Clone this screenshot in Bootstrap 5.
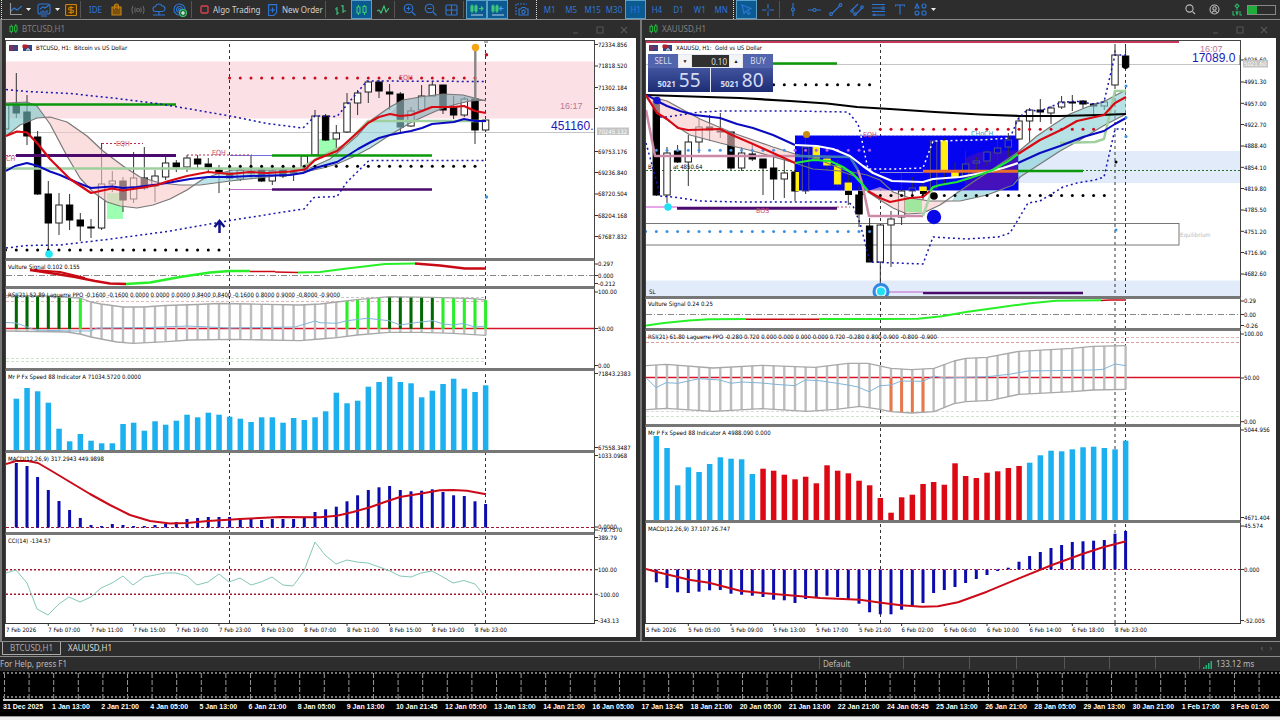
<!DOCTYPE html>
<html lang="en">
<head>
<meta charset="utf-8">
<meta name="viewport" content="width=device-width, initial-scale=1">
<title>Trading terminal</title>
<link href="https://cdn.jsdelivr.net/npm/bootstrap@5.3.0/dist/css/bootstrap.min.css" rel="stylesheet">
<style>
:root{--ui:"Noto Sans","Open Sans",sans-serif;--chart:"DejaVu Sans Condensed","Noto Sans",sans-serif;--line:#8a8a8a;--ink:#2c77d8}
body{background:#2d2d2d;color:#d0d0d0;font:8px/12px var(--ui)}
.tools{height:20px;border-bottom:1px solid var(--line)}
.tools button{background:none;border:1px solid transparent;padding:0;color:inherit;height:19px;width:21px;display:flex;align-items:center;justify-content:center;flex:none;white-space:nowrap}
.tools button.on{background:#0c5a92;border-color:#5aa0c8}
.tools svg,.mini{fill:none;stroke:var(--ink);stroke-width:1.1;flex:none}
.tools .pair{width:28px;gap:4px}
.tools .algo{width:66px;gap:4px;justify-content:flex-start;padding-left:3px}
.tools .order{width:62px;gap:4px;justify-content:flex-start;padding-left:5px}
.divide{width:5px;height:17px;flex:none;border-left:1px solid #555;margin-left:1px}
.divide.thin{width:3px}
.grip{width:2px;height:19px;flex:none;border-left:1px dotted #ddd;margin:0 1px}
.evenly{flex:none}.frames{width:193px}.draws{width:129px}
.evenly button{flex:1 1 0;width:auto;color:var(--ink)}
.battery{width:29px;height:10px;border:1px solid #888}
.battery span{display:block;width:9px;height:8px;background:#1fae3c}
.win{border-left:2px solid #777;padding:0 4px 4px 3px;min-width:0}
.titlebar{height:18px;color:#808080}
.titlebar button{background:none;border:0;padding:0;width:24px;height:16px;display:flex;align-items:center;justify-content:center;margin-top:2px}
.sheet{background:#fff;padding-top:2px;color:#000}
.plot{border:solid #444;border-width:0 1px 3px;border-bottom-color:#777;min-width:0}
.pane:first-child .plot{border-top:1px solid #444}
.pane:nth-last-child(2) .plot{border-bottom:1px solid #333}
.plot>svg,.scale>svg{display:block;width:100%}
.scale{width:41px;flex:none}.gold .scale{width:35px}
.dates svg{display:block;width:100%;height:13px}
.sheet text{font-family:var(--chart);font-size:6px;fill:#000}
.sheet text.big{font:12px "Liberation Sans",sans-serif;fill:#1a1ab4}
.sheet text.clock{font:9px "Liberation Sans",sans-serif;fill:#b87896}
.deal{left:3px;top:16px;width:125px;color:#d4dcf4;font-family:var(--ui);background:#e4e8f4}
.deal button{background:#34468f;color:inherit;border:0;padding:0}
.deal .side{width:30px;height:14px;background:#5264ac;font-size:8px}
.deal input{width:37px;height:12px;background:#303030;border:0;color:#ddd;font:8px var(--ui);text-align:right;padding:0 2px}
.deal .step{width:12px;height:12px;background:#f4f4f4;color:#111;font-size:5px;line-height:12px}
.deal .quotes{gap:1px}
.deal .quote{height:24px;background:linear-gradient(#42549f,#1c2c74);display:flex;align-items:flex-end;justify-content:center;gap:3px;flex:1 1 0;font-size:8px;line-height:10px;padding-bottom:3px}
.deal .quote b{font-size:19px;font-weight:400;line-height:18px}
.deal .quote span{font-weight:700}
.tabs{height:16px;border-top:1px solid var(--line);border-bottom:1px solid var(--line);padding-left:2px}
.tabs a{color:#ddd;text-decoration:none;height:13px;line-height:12px;padding:0 7px}
.tabs a.cur{border:1px solid #aaa;border-top:0;color:#aaa}
.status{height:14px;line-height:13px;color:#bbb}
.status span{border-left:1px solid #555;padding-left:3px;flex:none;height:12px}
.strip{background:#000;height:45px;padding-left:3px}
.strip .labels{border-top:2px solid #ccc;font:bold 7px/12px "Liberation Sans",sans-serif;color:#fff}
.strip .labels span{flex:1 1 0;min-width:0;white-space:nowrap}
.foot{height:4px;background:#eee;border-top:1px solid #999}
</style>
</head>
<body class="d-flex flex-column min-vh-100">
<header class="tools d-flex align-items-center">
  <i class="grip"></i><i style="width:2px"></i>
  <button class="pair" aria-label="New chart"><svg width="13" height="13"><path d="M1.5 0v11.5H13M1 9l4-4 3 2 5-4" /><path d="M1.5 0v11.5H13" stroke="#999"/></svg><svg width="5" height="4"><path d="M0 0h5l-2.500 3z" fill="#eee" stroke="none"/></svg></button>
  <button class="pair" aria-label="Indicators"><svg width="14" height="14"><rect x="1" y="1" width="12" height="10" rx="2"/><path d="M3 6l3-2 2 1 4-3M4 8v2M6 7v3M8 8v2M10 7v3M4 13h6"/></svg><svg width="5" height="4"><path d="M0 0h5l-2.500 3z" fill="#eee" stroke="none"/></svg></button>
  <button style="width:17px" aria-label="Market"><svg width="12" height="12" style="stroke:#c98315"><rect x=".5" y=".5" width="11" height="11" rx="1" fill="#4a3208"/><path d="M8.500 3.500H5Q3.500 3.500 3.500 4.700T5 6h2q1.500 0 1.500 1.300T7 8.500H3.500M6 2v8"/></svg></button>
  <i class="divide"></i>
  <button aria-label="IDE"><span style="color:#2c77d8">IDE</span></button>
  <button aria-label="Shop"><svg width="11" height="13" style="stroke:#c98315"><path d="M1 4h9v8H1zM3.500 6V3q0-2 2-2t2 2v3" fill="#7a5210"/></svg></button>
  <button aria-label="Signals"><svg width="14" height="10" style="stroke:#666"><circle cx="7" cy="5" r="1.500"/><path d="M4.500 2.500q-1.500 2.500 0 5M9.500 2.500q1.500 2.500 0 5M2 1q-2 4 0 8M12 1q2 4 0 8"/></svg></button>
  <button aria-label="Cloud"><svg width="14" height="13"><path d="M3.500 8.500a2.500 2.500 0 0 1 0-5 3.500 3.500 0 0 1 6.500-.5 2.700 2.700 0 0 1 .5 5.500zM7 8.500V12M1 12h12"/></svg></button>
  <button aria-label="Network"><svg width="14" height="14"><path d="M6 12A5.500 5.500 0 1 1 12 6.500M6 9.500A3 3 0 1 1 9.500 6"/><circle cx="6.500" cy="6.500" r="1"/><circle cx="10" cy="10" r="3.500" fill="#1f6b3c" stroke="#3ec46e"/><path d="M10 8v4M8 10h4" stroke="#fff"/></svg></button>
  <i class="divide"></i>
  <button class="algo"><svg width="9" height="9"><rect x="1" y="1" width="7" height="7" rx="1" stroke="#d8414b" stroke-width="1.400"/></svg>Algo Trading</button>
  <button class="order"><svg width="10" height="12"><path d="M.6.6h8v8l-3 3h-5zM4.600 3.500v5M2 6h5"/></svg>New Order</button>
  <i class="divide"></i>
  <button aria-label="Bars"><svg width="13" height="12" style="stroke:#3cc878"><path d="M3 3v8M3 5H1M3 9h2M9 1v8M9 2H7M9 7h3"/></svg></button>
  <button class="on" aria-label="Candles"><svg width="11" height="12" style="stroke:#3cc878"><path d="M1 3h3v6H1zM2.500 1v2M2.500 9v2M7 2.500h3v6H7zM8.500 1v1M8.500 9v2"/></svg></button>
  <button aria-label="Line"><svg width="12" height="10" style="stroke:#3cc878"><path d="M0 6l2-1 2 3 3-7 2 6 3-4"/></svg></button>
  <i class="divide"></i>
  <button aria-label="Zoom in"><svg width="13" height="13"><circle cx="5.500" cy="5.500" r="4.300"/><path d="M9 9l3.500 3.500M3.500 5.500h4M5.500 3.500v4"/></svg></button>
  <button aria-label="Zoom out"><svg width="13" height="13"><circle cx="5.500" cy="5.500" r="4.300"/><path d="M9 9l3.500 3.500M3.500 5.500h4"/></svg></button>
  <button aria-label="Tile"><svg width="13" height="12"><rect x="1" y="1" width="11" height="10" rx="1"/><path d="M6.500 1v10M1 6h11"/></svg></button>
  <i class="divide thin"></i>
  <button class="on" aria-label="Auto scroll"><svg width="14" height="12" style="stroke:#3cc878"><path d="M1 2h2v5H1zM5 2h2v5H5zM2 .5V9M6 .5V9M9 4.500h4M11 2.500l2 2-2 2"/><path d="M1 11h12" stroke="#aac8e0"/></svg></button>
  <button class="on" aria-label="Shift"><svg width="14" height="12" style="stroke:#3cc878"><path d="M1 2h2v5H1zM5 2h2v5H5zM2 .5V9M6 .5V9"/><path d="M8.500 4.500h4M10.500 2.500l-2 2 2 2" stroke="#4a9cf0"/><path d="M1 11h12" stroke="#aac8e0"/></svg></button>
  <button style="width:27px" aria-label="Screenshot"><svg width="14" height="13"><path d="M1 12V1h11" stroke-dasharray="2 1"/><path d="M4 6h2l1-1.500h3L11 6h2v6H4z"/><circle cx="8.500" cy="8.800" r="1.700"/></svg></button>
  <i class="grip"></i>
  <div class="evenly frames d-flex"><button>M1</button><button>M5</button><button>M15</button><button>M30</button><button class="on">H1</button><button>H4</button><button>D1</button><button>W1</button><button>MN</button></div>
  <i class="grip"></i>
  <button class="on" aria-label="Cursor"><svg width="11" height="11"><path d="M1 1l9 3.500L6.500 6 9 9.500 7.500 10.500 5 7 3 9.500z"/></svg></button>
  <button aria-label="Crosshair"><svg width="12" height="12"><path d="M6 0v4.500M6 7.500V12M0 6h4.500M7.500 6H12M6 6h.5"/></svg></button>
  <i class="divide thin"></i>
  <div class="evenly draws d-flex">
    <button aria-label="Vertical line"><svg width="6" height="13"><path d="M3 0v5M3 8v5"/><circle cx="3" cy="6.500" r="1.500"/></svg></button>
    <button aria-label="Horizontal line"><svg width="13" height="6"><path d="M0 3h5M8 3h5"/><circle cx="6.500" cy="3" r="1.500"/></svg></button>
    <button aria-label="Trend line"><svg width="14" height="13"><path d="M3 10.500l7.500-7.500"/><circle cx="2" cy="11" r="1.400"/><circle cx="11.500" cy="2" r="1.400"/></svg></button>
    <button aria-label="Channel"><svg width="14" height="13"><path d="M2 7l6-6M5 12l7-7"/><circle cx="2" cy="8" r="1.300"/><circle cx="12" cy="4" r="1.300"/><circle cx="5" cy="11" r="1.300"/></svg></button>
    <button aria-label="Fibonacci"><svg width="14" height="13"><path d="M0 1.500h13M0 5h9M0 8.500h13M3 12h10"/><circle cx="11" cy="5" r="1.300"/><circle cx="2" cy="12" r="1"/></svg></button>
    <button aria-label="Text"><svg width="10" height="11"><path d="M.5 2.500V1h9v1.500M5 1v9.500"/></svg></button>
  </div>
  <button class="pair" aria-label="Shapes"><svg width="13" height="13"><path d="M1 5l2-4 2 4z"/><circle cx="10" cy="3" r="2"/><circle cx="3" cy="10" r="2"/><rect x="8" y="8" width="4" height="4" rx="1"/></svg><svg width="5" height="4"><path d="M0 0h5l-2.500 3z" fill="#eee" stroke="none"/></svg></button>
  <div class="ms-auto d-flex align-items-center pe-1">
    <button style="width:24px" aria-label="Search"><svg width="11" height="11" style="stroke:#bbb"><circle cx="4.500" cy="4.500" r="3.600"/><path d="M7.500 7.500L10 10"/></svg></button>
    <button style="width:24px" aria-label="Account"><svg width="11" height="11" style="stroke:#bbb"><circle cx="5.500" cy="5.500" r="4.500"/><circle cx="5.500" cy="4.500" r="1.700"/><path d="M2.500 9q3-4 6 0"/></svg></button>
    <button aria-label="Level"><svg width="10" height="13" style="stroke:#2db565"><path d="M5 1l2 2-2 2-2-2zM5 5v2M1 8v4h2M4 8l1 4 1-4M8 8v4h2"/></svg></button>
    <div class="battery"><span></span></div>
  </div>
</header>

<main class="row g-0">
  <section class="col win">
    <div class="titlebar d-flex align-items-center"><svg class="mini ms-1 me-1" style="stroke:#1fae3c" width="9" height="10"><path d="M1 2.500h2.500v5H1zM2.300.5v2M2.300 7.500v2M5.500 2h2.500v5H5.500zM6.800 0v2M6.800 7v2"/></svg>BTCUSD,H1<div class="ms-auto d-flex"><button aria-label="Minimize"><svg class="mini" width="8" height="8" style="stroke:#555"><path d="M1 7h5"/></svg></button><button aria-label="Maximize"><svg class="mini" width="8" height="8" style="stroke:#555"><path d="M1 1h6v6H1z"/></svg></button><button aria-label="Close"><svg class="mini" width="8" height="8" style="stroke:#555"><path d="M1 1l6 6M7 1L1 7"/></svg></button></div></div>
    <div class="sheet" id="btc"></div>
  </section>
  <section class="col win">
    <div class="titlebar d-flex align-items-center"><svg class="mini ms-1 me-1" style="stroke:#1fae3c" width="9" height="10"><path d="M1 2.500h2.500v5H1zM2.300.5v2M2.300 7.500v2M5.500 2h2.500v5H5.500zM6.800 0v2M6.800 7v2"/></svg>XAUUSD,H1<div class="ms-auto d-flex"><button aria-label="Minimize"><svg class="mini" width="8" height="8" style="stroke:#555"><path d="M1 7h5"/></svg></button><button aria-label="Maximize"><svg class="mini" width="8" height="8" style="stroke:#555"><path d="M1 1h6v6H1z"/></svg></button><button aria-label="Close"><svg class="mini" width="8" height="8" style="stroke:#555"><path d="M1 1l6 6M7 1L1 7"/></svg></button></div></div>
    <div class="position-relative">
      <div class="sheet gold" id="xau"></div>
      <div class="deal position-absolute">
        <div class="d-flex align-items-center justify-content-between"><button class="side">SELL</button><button class="step" aria-label="Less">▼</button><input value="0.10" aria-label="Volume"><button class="step" aria-label="More">▲</button><button class="side">BUY</button></div>
        <div class="quotes d-flex"><button class="quote"><span>5021</span><b>55</b></button><button class="quote"><span>5021</span><b>80</b></button></div>
      </div>
    </div>
  </section>
</main>

<nav class="tabs d-flex"><a href="#btc" class="cur">BTCUSD,H1</a><a href="#xau">XAUUSD,H1</a><span class="ms-auto me-2 text-secondary">‹ &nbsp; ›</span></nav>
<footer>
  <div class="status d-flex"><div class="flex-fill">For Help, press F1</div><span style="width:84px">Default</span><span style="width:66px"></span><span style="width:47px"></span><span style="width:48px"></span><span style="width:45px"></span><span style="width:46px"></span><span style="width:44px"></span><span style="width:81px"><svg width="9" height="8" class="me-1"><path d="M0 8V6h1.500v2zM2.500 8V4H4v4zM5 8V2h1.500v6zM7.500 8V0H9v8z" fill="#1fb57a"/></svg>133.12 ms</span></div>
  <div class="strip"><svg class="d-block w-100" height="28"><defs><pattern id="cells" width="24.6" height="28" patternUnits="userSpaceOnUse"><path d="M1.500 2v26" stroke="#999" stroke-dasharray="5 2"/></pattern></defs><rect width="100%" height="28" fill="url(#cells)"/><path d="M0 2h3000M0 26h3000" stroke="#777" stroke-width="2" stroke-dasharray="2 2"/></svg><div class="labels d-flex" id="days"></div></div>
  <div class="foot"></div>
</footer>

<script>
const f = n => Math.round(n * 10) / 10;
const line = (p, c, w = 1, o = '') => `<polyline points="${p}" fill="none" stroke="${c}" stroke-width="${w}" stroke-linejoin="round" ${o}/>`;
const area = (p, c, o = .6) => `<polygon points="${p}" fill="${c}" fill-opacity="${o}"/>`;
const hline = (y, a, b, c, w = 1, d = '') => `<path d="M${a} ${y}H${b}" stroke="${c}" stroke-width="${w}" ${d && `stroke-dasharray="${d}"`}/>`;
const vdash = (...xs) => xs.map(x => `<path d="M${x} 38V624" stroke="#333" stroke-dasharray="3 3"/>`).join('');
const rect = (x, y, w, h, c, s = 'none') => `<rect x="${f(x)}" y="${y}" width="${w}" height="${f(h)}" fill="${c}" stroke="${s}"/>`;
const text = (x, y, t, o = '') => `<text x="${x}" y="${y}" ${o}>${t}</text>`;
const dot = (x, y, r, c, o = '') => `<circle cx="${f(x)}" cy="${y}" r="${r}" fill="${c}" ${o}/>`;
const at = (base, i) => f(base + 10.667 * i);
const dots = (base, a, b, y, c) => Array.from({length: b - a + 1}, (_, k) => dot(at(base, a + k), y, 1.5, c)).join('');
const blueDots = 'stroke-dasharray="2 3"';

// kinds: u rising, d falling, y yellow, b hollow on the box
function candles(base, list, first) {
  return list.map(([kind, hi, lo, top, bottom], k) => {
    const x = at(base, first + k), h = Math.max(bottom - top, 1);
    const fill = {u: '#fff', d: '#000', y: '#ffee10', b: '#0000e8'}[kind];
    const edge = {u: '#222', d: '#000', y: '#ffee10', b: '#505080'}[kind];
    return `<path d="M${x} ${hi}V${lo}" stroke="#333"/>` + rect(x - 3.2, top, 6.4, h, fill, edge);
  }).join('');
}
const bars = (base, tops, floor, w, color) => tops.map((t, i) => rect(at(base, i) - w / 2, Math.min(t, floor), w, Math.abs(floor - t), typeof color == 'function' ? color(i) : color)).join('');
function yAt(pts, x) {
  for (let k = 1; k < pts.length; k++) if (x <= pts[k][0]) {
    const [a, b] = [pts[k - 1], pts[k]];
    return f(a[1] + (b[1] - a[1]) * (x - a[0]) / (b[0] - a[0]));
  }
  return pts.at(-1)[1];
}
const pairs = s => s.split(' ').map(p => p.split(',').map(Number));
function ribbon(base, up, low, mid, color) {
  const U = pairs(up), L = pairs(low); let s = '';
  for (let i = 0; i < 45; i++) {
    const x = at(base, i), c = color(i), u = yAt(U, x), l = yAt(L, x);
    s += rect(x - 1.2, u, 2.4, l - u, '#bdbdbd');
    if (c) s += c[1] ? rect(x - 1.5, mid, 3, l - mid, c[0]) : rect(x - 1.5, u, 3, mid - u, c[0]);
  }
  return s + line(up, '#a8a8a8', 1.3) + line(low, '#a8a8a8', 1.3);
}
const scaleText = (x, list) => list.map(([y, t]) => `<path d="M${x} ${y}h3" stroke="#333"/>` + text(x + 3, y + 2.2, t)).join('');
function build(id, x0, xs, panes, dates) {
  document.getElementById(id).innerHTML = panes.map(p => `<div class="pane d-flex"><div class="plot flex-fill"><svg height="${p.h}"><g transform="translate(${-x0},${-p.y})">${p.draw}</g></svg></div><div class="scale"><svg height="${p.h}" overflow="visible"><g transform="translate(${-xs},${-p.y})">${scaleText(xs, p.scale)}${p.extra || ''}</g></svg></div></div>`).join('') + `<div class="dates"><svg><g transform="translate(${1 - x0},-624)">${dates}</g></svg></div>`;
}
const flags = x => rect(x, 45, 9, 6, '#28488c') + `<path d="M${x} 46h5M${x} 48h9M${x} 50h5" stroke="#b02030"/>` + rect(x + 14, 45, 9, 6, '#28488c') + `<path d="M${x + 14} 45h4v3h-4zM${x + 20} 45v3" stroke="#b02030" fill="#b02030"/><path d="M${x + 18} 51v-2h2v2" stroke="#fff"/>`;
const note = 'style="fill:#c84c6c;font-size:7px"';

/* ---------- BTCUSD ---------- */
const B = 16.3;
const bFastA = '6,103 27,102 37,106 50,124 67,156 80,178 93,192 107,202 120,206 137,208 153,205 170,199 187,190 203,179 217,174 233,170 270,170 300,169 310,168 330,159 343,148 357,136 370,121 390,107 403,100 420,97 443,94 463,95 486,101';
const bSlow = '6,136 20,125 37,118 50,117 67,122 87,136 103,151 123,166 140,177 160,183 180,185 200,185 230,181 267,177 300,173 323,168 337,164 353,157 370,148 390,135 410,123 427,115 443,108 457,104 470,101 486,100';
const bUp = '6,295.500 48,296 80,298 91,302 101,304 123,307 144,307 165,305.500 197,304.500 219,303.500 250,304 300,305 320,304 337,302 357,299.700 389,296.700 433,297.300 473,298.700 486,300';
const bLow = '6,331 67,332 80,334 91,337 101,339 117,342 133,343.300 167,341.700 190,340 233,339.300 300,340.700 320,339 337,337.700 357,335 389,332.300 420,332.300 453,333.300 486,335.300';
const bV = vdash(229.5, 485.5);
build('btc', 6, 595, [
 {y: 41, h: 217, draw:
  rect(6, 61.5, 2000, 57, '#fbe0e5') + hline(132.5, 6, 2000, '#c4c4c4') +
  rect(107, 193, 16, 26, '#9dffb2') + rect(319, 139, 17, 15, '#9dffb2') + bV +
  candles(B, [['u',105,129,105,129],['d',73,118,105,113],['d',95,145,112,136],['d',131,195,137,194],['d',181,249,194,223],['u',193,235,205,223],['d',194,230,205,220],['d',213,241,220,226],['d',219,238,227,227],['u',143,230,184,228],['u',171,192,181,184],['d',177,212,181,200],['u',152,203,178,199],['d',147,190,178,188],['u',170,202,176,186],['u',157,180,163,177],['d',160,172,163,167],['u',155,172,158,167],['d',155,169,159,164],['d',158,171,164,167],['d',165,193,170,172],['d',168,181,173,178],['u',168,181,170,179],['d',155,178,172,172],['d',168,182,170,181],['u',168,185,171,181],['d',167,178,170,176],['d',168,181,172,172],['u',155,172,156,170],['u',110,156,116,155],['d',114,141,116,140],['u',125,148,133,139],['u',93,133,103,132],['u',90,115,93,103],['u',81,103,82,92],['d',80,98,82,91],['d',84,110,92,94],['d',92,132,94,127],['u',107,127,111,126],['u',85,110,96,110],['u',82,96,85,96],['d',85,114,85,110],['d',96,119,107,115],['u',97,117,99,115],['d',47,144,99,130],['u',120,132,120,130]], -1) +
  area('6,103 27,102 37,106 45,117 37,118 20,125 6,136', '#7cc8c8') +
  area('45,117 50,124 67,156 80,178 93,192 107,202 120,206 137,208 153,205 170,199 187,190 195,185 180,185 160,183 140,177 123,166 103,151 87,136 67,122 50,117', '#f8c8c8') +
  area('195,185 203,179 217,174 233,170 270,170 300,169 310,168 330,159 343,148 357,136 370,121 390,107 403,100 420,97 443,94 463,95 486,101 470,101 443,108 427,115 410,123 390,135 370,148 353,157 337,164 323,168 300,173 267,177 230,181', '#90d0d8') +
  area('389,114 403,100 420,97 443,94 463,95 486,101 470,101 443,108 427,115 411,122', '#a08088', .25) +
  line(bFastA, '#777', 1.2) + line(bSlow, '#777', 1.2) +
  hline(104.5, 6, 176, '#0a960a', 2.5) + hline(155.5, 16, 176, '#4b0a6e', 3) + hline(155.5, 6, 16, '#c040a0', 1, '2 1') +
  line('6,168.500 300,168.500 318,158 345,145 368,121 486,121', '#9fcf9f', 2.5) +
  hline(155.5, 230, 272, '#7070e0') + hline(155.5, 272, 432, '#0a9a0a', 2.5) + hline(189.5, 230, 272, '#c070c8') + hline(189.5, 272, 432, '#4b0a6e', 2.5) +
  hline(143.5, 102, 143, '#b03050', 1, '2 2') + hline(155, 187, 252, '#b03050', 1, '2 2') +
  dots(B, 20, 43, 78, '#d00a1e') + dots(B, 20, 43, 166.3, '#000') + dots(B, -1, 19, 250, '#000') +
  line('6,89.500 27,91.500 70,93.500 117,98.500 157,103.500 187,108.500 230,116 267,123.500 303,128 315,116 337,116.500 367,81 486,81.500', '#1616b0', 1.5, blueDots) +
  line('6,248 27,245.500 60,245 107,239.500 167,231.500 230,220.500 287,211.500 304,209 314,197.500 337,196.500 347,182 369,160.500 486,160.500', '#1616b0', 1.5, blueDots) +
  line('6,171 15,166 27,163 38,166 50,171.500 60,175 77,182.500 91,188 112,186.500 123,188 137,187 157,184.500 170,182.500 190,179 208,177 230,177 250,176 290,175 303,173 315,168 337,162 347,156 358,149 369,143 379,138 390,135 400,133 411,131 422,128 432,124 443,123 454,122 464,119 475,121 486,121', '#0a0ac0', 2) +
  line('6,136 17,131.500 27,132.500 37,143 50,159 70,179 91,193 112,188.500 123,190.500 143,187.500 157,185 167,181.500 187,176 208,172 230,174 250,172 267,173 290,171.500 305,169.500 315,160 337,151 347,142 357,133 368,123 379,117 390,114 400,116 411,115 422,111 432,107 454,107 464,106 475,111 486,113', '#d80a14', 2.2) +
  `<path d="M475.500 48V100" stroke="#888" stroke-width="2"/>` + dot(475.5, 47.5, 3.7, '#f5a414') + dot(486.5, 54.7, 1.7, '#d00a1e') + dot(486.5, 197, 1.7, '#3c90e0') + dot(49, 254, 3.8, '#20e8f4') + rect(484, 41, 4, 2, '#aaa') +
  `<path d="M219.500 233V222M214.500 227l5-6 5 6" fill="none" stroke="#10108a" stroke-width="2.500"/>` +
  text(116, 146, 'EQH', note) + text(212, 155, 'EQH', note) + text(399, 80, 'EQH', note) + text(6, 161, 'CH', note) +
  text(560, 109, '16:17', 'class="clock"') + text(551, 130, '451160.', 'class="big"') +
  flags(9) + text(36, 50, 'BTCUSD, H1:&#160; Bitcoin vs US Dollar'),
  scale: [[45.5,'72334.856'],[67,'71818.520'],[88.5,'71302.184'],[109.5,'70785.848'],[152.5,'69753.176'],[173.5,'69236.840'],[195,'68720.504'],[216.5,'68204.168'],[237.5,'67687.832']],
  extra: rect(597, 128.5, 32, 7.5, '#c4c4c4') + text(598, 134.5, '70245.132', 'style="fill:#fff"')},
 {y: 261, h: 25, draw: hline(275.5, 6, 2000, '#888', 1, '6 2 1 2') + bV +
  line('30,270 50,273 75,277 95,281 110,283.500 126,284', '#c80a14', 2.5) + line('34,270 60,272 85,278', '#c80a14', 2) + line('126,284 150,282.500 180,277 210,272.500 230,271 250,271', '#28f028', 2.5) +
  hline(271.5, 250, 275, '#c80a14', 1.5) + line('275,272 298,272.500', '#c80a14', 1.5) + line('298,272.500 320,272 347,268.500 385,264 415,263.500', '#28f028', 2) + line('415,263.500 440,265.500 465,268.500 486,268.500', '#c80a14', 2.5) + text(8, 269, 'Vulture Signal 0.102 0.155'),
  scale: [[264,'0.297'],[275.5,'0.000'],[283.5,'-0.212']]},
 {y: 289, h: 79, draw: hline(297.5, 6, 486, '#c8c8c8', 1, '3 2') + hline(301.5, 6, 486, '#e0b8b8', 1, '3 2') + hline(358.5, 6, 486, '#cde4cd', 1, '3 2') + hline(361.5, 6, 486, '#cde4cd', 1, '3 2') + bV +
  hline(328.5, 6, 2000, '#d8142a', 1.5) + ribbon(B, bUp, bLow, 329, i => i < 6 ? ['#006a00'] : i == 6 ? ['#28f028'] : i >= 35 && i <= 39 ? ['#006a00'] : i >= 31 ? ['#28f028'] : null) +
  line('6,322.500 16,323 27,327 35,330 70,331 91,331 97,328 150,327.500 187,326 230,328 295,327 315,321 320,322.700 337,323.300 347,320.700 367,318.300 389,320.700 400,325 420,322 433,320.700 443,324 453,325 463,323.500 475,327 486,326', '#80b4d8') +
  text(8, 297, 'RSI(21) 52.89 Laguerre PPO -0.1600 -0.1600 0.0000 0.0000 0.0000 0.8400 0.8400 -0.1600 0.8000 0.9000 -0.8000 -0.9000'),
  scale: [[292,'100.00'],[328.5,'50.00'],[365.5,'0.00']]},
 {y: 371, h: 79, draw: bV + bars(B, [398.7,388,391.3,402.7,428.7,441.3,434,440.7,443.3,443.3,424,422.7,430.7,421.3,424.7,420.7,414.7,417.3,412.7,414.7,416.7,418.7,422,417.3,417.3,422.7,418,420,417.3,411.3,392.7,403.3,400.7,386.7,382,376.7,382,383.3,397.3,390.7,384,378.7,388.7,392,385.3], 451, 5.5, '#1cb0ee') + text(8, 379, 'Mr P Fx Speed 88 Indicator A 71034.5720 0.0000'),
  scale: [[373.5,'71843.2383'],[447.5,'67558.3487']]},
 {y: 453, h: 79, draw: bV + hline(527.5, 6, 2000, '#a01830', 1, '3 2') + bars(B, [463,466,477,490,501,510,518,525,526,524,525,526,526,525,524,522,519,518,517,517,517,518,519,520,519,519,519,517,512,509.3,506.7,501.3,495.3,490,487.3,486,490,491.3,490.7,489.3,492,495.3,496,501.3,504], 527.5, 3, '#0c0cae') +
  line('6,464 16,461 28,461 38,463 50,470 70,482 90,494 110,505 130,515 150,521 170,523.500 187,523 208,521 240,519 280,517 320,517.300 337,515.700 353,512 370,507.300 387,501.300 400,497 420,493.700 440,490.300 453,490 467,490.700 486,494.300', '#cc0a18', 2) + text(8, 461, 'MACD(12,26,9) 317.2943 449.9898'),
  scale: [[455.5,'1033.0968'],[527,'0.0000'],[530,'-79.7570']]},
 {y: 535, h: 88, draw: bV + hline(569.7, 6, 2000, '#a8142c', 1.5, '2 2') + hline(594.3, 6, 2000, '#a8142c', 1.5, '2 2') +
  line('6,573 16,570 27,583 37,609 48,615 59,604 69,597 80,602 91,597 101,588 112,583 123,576 133,585 144,577 155,575 165,573 176,573 187,576 197,585 208,582 219,574 229,582 240,578 251,585 261,582 272,577 283,585 293,586 304,571 315,542 325,555 336,564 347,560 357,562 368,563 379,567 390,571 400,576 411,577 421,573 432,571 443,577 453,583 464,580.500 475,584 484,595', '#84c8b8') + text(8, 543, 'CCI(14) -134.57'),
  scale: [[537.5,'389.79'],[569.7,'100.00'],[594.3,'-100.00'],[620.5,'-343.13']]}
], text(6, 632, '7 Feb 2026') + ['7 Feb 07:00','7 Feb 11:00','7 Feb 15:00','7 Feb 19:00','7 Feb 23:00','8 Feb 03:00','8 Feb 07:00','8 Feb 11:00','8 Feb 15:00','8 Feb 19:00','8 Feb 23:00'].map((d, k) => `<path d="M${at(B, 3 + 4 * k)} 624v2" stroke="#333"/>` + text(at(B, 3 + 4 * k), 632, d)).join(''));

/* ---------- XAUUSD ---------- */
const X = 656.3, xV = vdash(880.5, 1115, 1125.5);
const xUp = '646,365.700 666,364.300 713,368 762,365.300 815,367.300 848,363.300 868,363.300 891,368.300 911,369.700 934,368.300 954,361 966,358.300 987,357.300 1019,351.300 1072,348.300 1093,346.300 1126,345.700';
const xLow = '646,409.700 666,408.300 713,411.300 762,408.700 807,411.300 836,409.300 860,406.300 880,409.300 891,411.700 911,413 934,411.700 954,403.700 966,401.700 991,400.300 1019,394.300 1072,391.700 1093,390 1126,389.300';
build('xau', 646, 1241, [
 {y: 41, h: 255, draw:
  rect(1018, 151, 2000, 32, '#e1ebfa') + rect(646, 280.5, 2000, 16, '#e1ebfa') + hline(64.5, 646, 3000, '#c4c4c4') +
  hline(42, 646, 1179, '#c4385c', 2) + xV + hline(170.5, 646, 3000, '#2a702a', 1, '2 2') +
  rect(640, 223.5, 539, 21.5, 'none', '#777') +
  rect(795, 135.5, 223.5, 55, '#0404f0') + area('965,190 965,158 980,152 1018,150 1018,175 1008,188', '#4a10b8', .6) +
  candles(X, [['d',100,196,101,195],['u',147,203,153,195],['d',145,163,151,162],['u',135,186,142,162],['u',119,153,127,142],['d',115,141,127,130],['d',113,138,131,132],['d',132,170,132,168],['u',147,171,153,168],['d',143,161,154,159],['d',159,195,159,168],['d',155,200,168,179],['u',157,198,173,179],['d',160,201,172,191],['b',135,194,147,191],['y',147,160,147,158],['y',158,170,159,165],['y',160,187,166,184],['y',175,205,183,190],['d',186,227,195,214],['d',218,262,226,262],['u',226,290,225,262],['u',211,267,219,225],['u',173,225,191,217],['b',177,195,188,191],['y',182,200,187,192],['b',141,190,141,188],['y',138,183,141,171],['y',162,179,172,177],['b',151,183,164,177],['b',157,170,161,163],['b',150,166,152,161],['b',140,160,148,153],['b',133,157,140,147],['u',117,140,121,139],['u',108,142,110,121],['d',99,122,110,112],['u',106,124,108,113],['u',96,109,102,107],['d',95,111,102,102],['d',100,108,101,104],['d',103,115,104,106],['u',100,110,102,106],['u',47,86,55,85],['d',47,68,56,67]], 0) +
  rect(795.5, 172, 3.5, 19, '#ffee10') + rect(858, 191, 7, 4, '#000') + rect(845, 191, 7, 4, '#000') + rect(920, 191, 7, 3, '#000') +
  area('647,96 667,101 700,119 733,133 773,147 795,154 795,163 753,151 720,143 690,135 673,124 657,113', '#f8c8c8') +
  area('868,191 880,187 893,192 910,198 930,201 952,201 940,205 923,213 907,214 893,208 880,200', '#f8c8c8') +
  rect(905, 199, 17, 13, '#9fe79f') +
  area('952,201 957,191 1003,190 987,195 965,200', '#86cfd4') +
  area('960,190 973,182 993,169 1018,152 1018,178 1008,187 1003,190', '#5014b4', .7) +
  area('1018,152 1037,136 1053,125 1070,114 1087,107 1103,102 1126,90 1126,114 1103,126 1080,140 1060,151 1040,164 1018,178', '#86cfd4') +
  line('647,96 667,101 700,119 733,133 773,147 795,154 817,159 847,171 867,175 880,180 893,192 910,198 930,201 960,201 987,195 1013,185 1020,177 1040,164 1060,151 1080,140 1103,126 1126,114', '#777', 1.2) +
  line('646,97 657,113 673,124 690,135 720,143 753,151 795,163 813,169 840,171 857,177 868,192 880,200 893,208 907,214 923,213 940,205 957,193 973,182 993,169 1018,152 1037,136 1053,125 1070,114 1087,107 1103,102 1126,90', '#777', 1.2) +
  line('646,110 655,156 795,156', '#cc8aa8', 2.5) + line('795,156 850,157 858,170', '#3c78b8', 2.5) + line('858,170 862,183 869,216 923,216', '#cc8aa8', 2.5) + line('923,216 932,190', '#a8d4a8', 2.5) + line('1060,143 1095,142 1104,139 1115,91 1126,91', '#a0cfa0', 2.5) +
  hline(63.5, 773, 837, '#0a9a0a', 2.5) + hline(208.3, 677, 837, '#4b0a6e', 3) + hline(207, 646, 677, '#d050d0') + hline(207, 837, 850, '#c84c6c', 1, '2 2') +
  hline(171.3, 923, 1018, '#e8702a', 3) + hline(171, 1018, 1083, '#0a9a0a', 2.5) + hline(292, 881, 923, '#c060c8') + hline(293, 923, 1083, '#4b0a6e', 2.5) +
  hline(135.5, 830, 1010, '#a0a0e0', 1, '2 2') + hline(172.5, 880, 923, '#9090d8') +
  dots(X, 11, 20, 84.7, '#000') + dots(X, 0, 12, 150.2, '#4a98e0') + dots(X, 13, 20, 150.2, '#b060e8') + dots(X, -1, 20, 231.5, '#3c90e0') + dots(X, 21, 41, 129.3, '#d00a1e') + dots(X, 21, 42, 195.5, '#000') +
  line('646,95 707,97 740,98 790,101 827,103.500 857,107 890,109 935,112 980,114.500 1020,116 1060,116 1100,115 1126,114', '#000', 2.2) +
  line('660,117 667,117 700,112 720,111 790,111 848,112 858,124 861,135', '#1616b0', 1.5, blueDots) + line('861,136 868,169 893,169 923,168 933,141 980,140 1010,138', '#fff', 1.5, blueDots) +
  line('1010,138 1018,119 1027,110 1040,111 1060,103 1075,101 1093,104 1104,102 1115,55 1126,55', '#1616b0', 1.5, blueDots) +
  line('646,143 657,183 660,196 673,197 700,201 740,202 848,202 853,206 860,223 870,262 923,264 933,237 967,239 998,237 1010,233 1028,203 1040,201 1050,195 1063,187 1077,183 1095,180 1104,177 1115,129 1126,129', '#1616b0', 1.5, blueDots) +
  line('647,95 657,101 667,106 680,111 695,115 720,118 737,124 753,128 773,135 795,145', '#0a0ac0', 2) + line('795,145 817,146 833,149 850,156 863,166 873,173 892,181 923,182 933,179 960,177 987,172 1003,168 1018,163', '#fff', 2.2) + line('1018,163 1040,153 1060,146 1083,137 1104,131 1115,124 1126,118', '#0a0ac0', 2) +
  line('646,95 657,113 667,119 678,128 688,130 720,129 732,135 753,144 773,153 795,163', '#d80a14', 2.2) + line('795,163 813,160 830,161 843,167 853,174 863,185 868,191', '#20e838', 2.2) + line('868,191 880,198 890,202 910,198 923,197 930,191', '#d80a14', 2.2) + line('930,191 933,187 940,185 957,182 973,177 993,170 1010,160 1018,154', '#20e838', 2.2) + line('1018,154 1040,140 1063,129 1077,121 1104,115 1115,103 1126,97', '#d80a14', 2.2) +
  dot(657, 100.5, 3.7, '#1414d0') + dot(668, 207, 3.7, '#20e0f4') + dot(806.5, 134.5, 3.5, '#c88c14') + dot(934, 196, 3.8, '#000') + dot(934, 217, 7.2, '#0808e8') +
  dot(881, 291.5, 7, '#e8f6ff', 'stroke="#2f88e4" stroke-width="3"') + dot(881, 291.5, 4, '#20e0f4') + dot(1125.5, 66, 3, '#000') +
  dot(1126, 86, 1.5, '#3c90e0') + dot(1126, 117.5, 1.5, '#3c90e0') + dot(1126, 136.5, 1.5, '#3c90e0') + dot(1116, 230, 1.5, '#3c90e0') + dot(1116, 162, 1.5, '#000') +
  text(863, 137, 'EQH', note) + text(971, 136, 'CHoCH', 'style="fill:#38a0c0;font-size:7px"') + text(756, 213, 'BOS', note) + text(1180, 237, 'Equilibrium', 'style="fill:#b8b8b8"') + text(649, 294, 'SL') + text(673, 169, 'at 4850.64') + text(648, 169, 'B') +
  text(1200, 52, '16:07', 'class="clock"') + text(1192, 62, '17089.0 p', 'class="big"') +
  flags(649) + text(676, 50, 'XAUUSD, H1:&#160; Gold vs US Dollar'),
  scale: [[61,'5025.60'],[83,'4991.30'],[104.3,'4957.00'],[125.5,'4922.70'],[147,'4888.40'],[168.3,'4854.10'],[189.5,'4819.80'],[211,'4785.50'],[232.3,'4751.20'],[253.5,'4716.90'],[275,'4682.60']],
  extra: rect(1243, 61, 25, 7.5, '#c4c4c4') + text(1244, 67, '5021.60', 'style="fill:#fff"')},
 {y: 299, h: 29, draw: hline(314.5, 646, 3000, '#888', 1, '6 2 1 2') + xV +
  line('646,325.500 664,323 689,320.500 709,319.300 746,319', '#28f028', 2) + hline(319.2, 746, 819, '#c80a14', 1.5) + line('819,319 880,319 918,318.700 942,316.300 966,312 995,308 1028,303.500 1056,300.700 1101,300.300', '#28f028', 2) + line('1101,300.500 1110,300 1126,300', '#c80a14', 1.5) + text(648, 306, 'Vulture Signal 0.24 0.25'),
  scale: [[301,'0.29'],[314.5,'0.00'],[325.5,'-0.26']]},
 {y: 331, h: 93, draw: hline(337.5, 646, 1240, '#e0b8b8', 1, '3 2') + hline(342.5, 646, 1240, '#d89c9c', 1, '3 2') + hline(411.5, 646, 1240, '#dcdcdc', 1, '3 2') + hline(416.5, 646, 1240, '#cde4cd', 1, '3 2') + xV +
  hline(377.5, 646, 3000, '#d8142a', 1.5) + ribbon(X, xUp, xLow, 378, i => i >= 22 && i <= 25 ? ['#e8784a', 1] : null) +
  line('646,377.700 656,387.700 666,382.700 678,383.300 699,378.700 720,380 731,383.300 742,382 762,383 775,384.300 795,385.700 805,380 820,380.700 848,385 858,387 869,391.700 880,385.700 891,385 901,381 923,381.300 934,376 944,378 987,376.700 1009,374.300 1028,371 1093,370 1103,369.300 1115,364 1126,365.700', '#80b4d8') +
  text(648, 339, 'RSI(21) 61.80 Laguerre PPO -0.280 0.720 0.000 0.000 0.000 0.000 0.720 -0.280 0.800 0.900 -0.800 -0.900'),
  scale: [[334,'100.00'],[378,'50.00'],[421.7,'0.00']]},
 {y: 427, h: 93, draw: xV + bars(X, [436,448,485.3,467.3,472,464,457.3,458.7,459.3,474,468.7,470.7,474.7,479.3,476.7,483.3,465.3,470.7,473.3,480.7,485.3,498,512.7,497.3,494.7,484,482,484.7,463.3,476,478,472.7,471.3,468,466,462.7,455.3,450.7,451.3,449.3,447.3,446.7,448,449.3,440.7], 521, 5.5, i => i >= 10 && i <= 34 ? '#dc0814' : '#1cb0ee') + text(648, 435, 'Mr P Fx Speed 88 Indicator A 4988.090 0.000'),
  scale: [[430,'5044.956'],[517.5,'4671.404']]},
 {y: 523, h: 100, draw: xV + hline(569.5, 646, 3000, '#a01830', 1, '2 2') + bars(X, [582.3,588,592.3,593,591.7,590.3,590,593.7,594.7,595.7,597,599.7,600.3,603,599,597,595.7,597,599,603.7,612.3,614.3,614.3,609.7,605.7,603,593,590,587,583,579,575,571,567.7,561.7,556,552,548,545,542,541.3,540.7,540,533.7,531], 569.5, 3, '#0c0cae') +
  line('646,569 656,571.700 678,577 689,579.700 709,582.700 740,590.700 762,593 795,595.700 820,598 860,599.700 881,602.700 901,605.300 922,606.700 938,606.300 958,602.300 987,591.700 1019,578.300 1052,565 1083,553.700 1103,547.300 1126,541.300', '#cc0a18', 2) + text(648, 531, 'MACD(12,26,9) 37.107 26.747'),
  scale: [[526,'45.574'],[569.5,'0.000'],[620.5,'-52.005']]}
], text(646, 632, '5 Feb 2026') + ['5 Feb 05:00','5 Feb 09:00','5 Feb 13:00','5 Feb 17:00','5 Feb 21:00','6 Feb 02:00','6 Feb 06:00','6 Feb 10:00','6 Feb 14:00','6 Feb 18:00','8 Feb 23:00'].map((d, k) => `<path d="M${at(X, 3 + 4 * k)} 624v2" stroke="#333"/>` + text(at(X, 3 + 4 * k), 632, d)).join(''));

document.getElementById('days').innerHTML = ['31 Dec 2025','1 Jan 13:00','2 Jan 21:00','4 Jan 05:00','5 Jan 13:00','6 Jan 21:00','8 Jan 05:00','9 Jan 13:00','10 Jan 21:45','12 Jan 05:00','13 Jan 13:00','14 Jan 21:00','16 Jan 05:00','17 Jan 13:45','18 Jan 21:00','20 Jan 05:00','21 Jan 13:00','22 Jan 21:00','24 Jan 05:45','25 Jan 13:00','26 Jan 21:00','28 Jan 05:00','29 Jan 13:00','30 Jan 21:00','1 Feb 17:00','3 Feb 01:00'].map(d => `<span>${d}</span>`).join('');
</script>
<script src="https://cdn.jsdelivr.net/npm/bootstrap@5.3.0/dist/js/bootstrap.bundle.min.js"></script>
</body>
</html>
